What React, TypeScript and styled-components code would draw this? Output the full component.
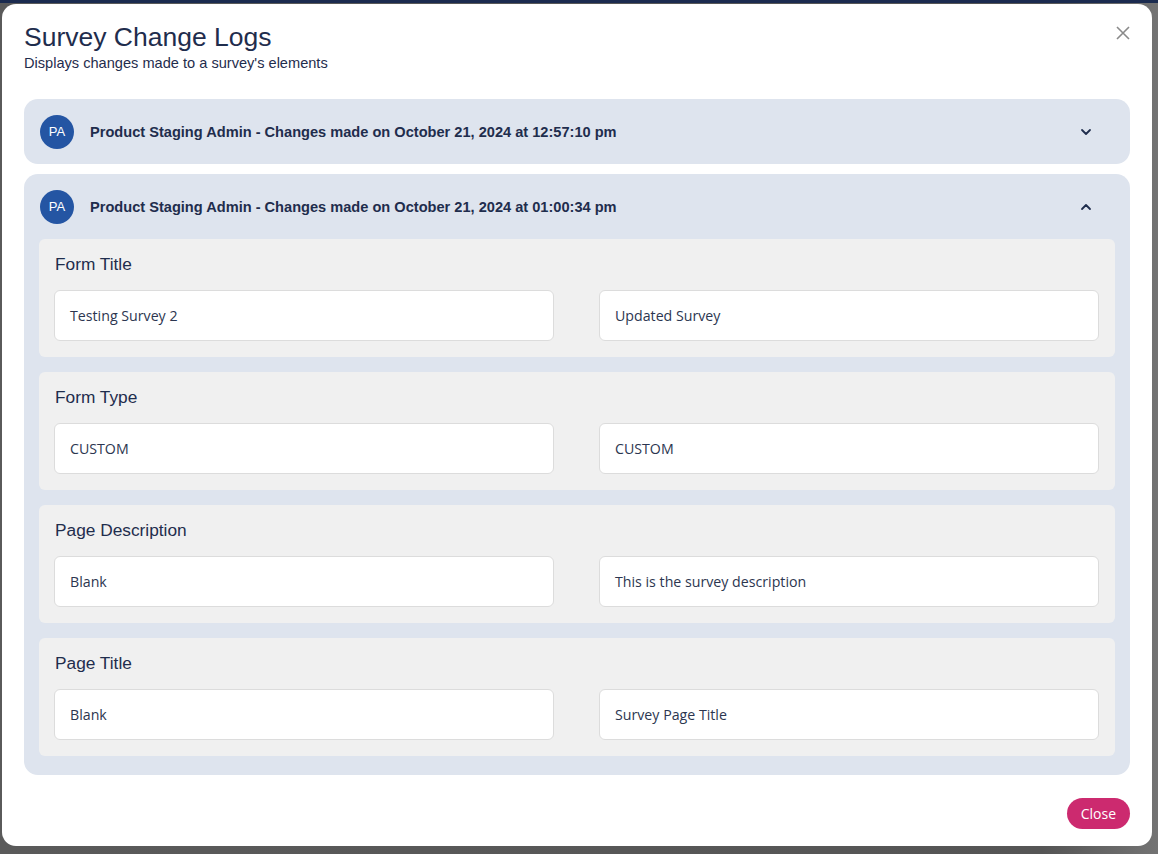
import { createGlobalStyle, styled } from "styled-components";

const GlobalStyle = createGlobalStyle`
  html, body {
    margin: 0;
    padding: 0;
    background: #555555;
  }
  * { box-sizing: border-box; }
`;

const Backdrop = styled.div`
  min-height: 854px;
  border-top: 3px solid #1b2b4f;
  padding: 1px 6px 8px 2px;
  background: linear-gradient(to right, #5a5a5a 0%, #555555 90%, #737373 100%);
`;

const Modal = styled.div`
  position: relative;
  background: #ffffff;
  border-radius: 14px;
  height: 842px;
  padding: 17px 22px 16px 22px;
  display: flex;
  flex-direction: column;
  font-family: "Liberation Sans", Arial, sans-serif;
  color: #1f2d4d;
`;

const Header = styled.div`
  margin-bottom: 27px;
`;

const Title = styled.h1`
  margin: 0;
  font-size: 26.5px;
  font-weight: 400;
  line-height: 32px;
  color: #1f2d4d;
`;

const Subtitle = styled.p`
  margin: 1px 0 0;
  font-size: 14.6px;
  line-height: 18px;
  color: #1f2d4d;
`;

const CloseX = styled.button`
  position: absolute;
  top: 19px;
  right: 19px;
  width: 20px;
  height: 20px;
  padding: 0;
  border: none;
  background: none;
  cursor: pointer;
  display: flex;
  align-items: center;
  justify-content: center;
`;

const List = styled.div`
  display: flex;
  flex-direction: column;
  gap: 10px;
`;

const Item = styled.div`
  background: #dee4ee;
  border-radius: 14px;
`;

const ItemHead = styled.div`
  height: 65px;
  display: flex;
  align-items: center;
  padding: 0 38px 0 16px;
  gap: 16px;
`;

const Avatar = styled.div`
  width: 34px;
  height: 34px;
  border-radius: 50%;
  background: #2455a3;
  color: #ffffff;
  font-size: 13px;
  display: flex;
  align-items: center;
  justify-content: center;
  flex-shrink: 0;
`;

const HeadText = styled.div`
  flex: 1;
  font-size: 14.6px;
  font-weight: 700;
  color: #1f2d4d;
`;

const ItemBody = styled.div`
  display: flex;
  flex-direction: column;
  gap: 15px;
  padding: 0 15px 19px;
`;

const Section = styled.div`
  background: #f0f0f0;
  border-radius: 6px;
  padding: 15px 16px 16px 15px;
`;

const SectionTitle = styled.div`
  font-size: 17.3px;
  line-height: 20px;
  color: #1f2d4d;
  margin-bottom: 16px;
  padding-left: 1px;
`;

const Values = styled.div`
  display: grid;
  grid-template-columns: 500px 500px;
  justify-content: space-between;
`;

const ValueBox = styled.div`
  height: 51px;
  background: #ffffff;
  border: 1px solid #dcdcdc;
  border-radius: 6px;
  padding: 0 15px;
  display: flex;
  align-items: center;
  font-family: "Open Sans", "Noto Sans", sans-serif;
  font-size: 14.2px;
  color: #2c3650;
`;

const Footer = styled.div`
  margin-top: auto;
  display: flex;
  justify-content: flex-end;
`;

const CloseButton = styled.button`
  height: 31px;
  padding: 0 14px;
  margin-bottom: 1px;
  border: none;
  border-radius: 16px;
  background: #cc2a6f;
  color: #ffffff;
  font-family: "Open Sans", "Noto Sans", sans-serif;
  font-size: 14px;
  cursor: pointer;
`;

const Chevron = ({ up }: { up?: boolean }) => (
  <svg width="12" height="12" viewBox="0 0 12 12" fill="none">
    <path
      d={up ? "M2 8l4-4 4 4" : "M2 4l4 4 4-4"}
      stroke="#1f2d4d"
      strokeWidth="1.8"
      strokeLinecap="round"
      strokeLinejoin="round"
    />
  </svg>
);

const changes = [
  { label: "Form Title", from: "Testing Survey 2", to: "Updated Survey" },
  { label: "Form Type", from: "CUSTOM", to: "CUSTOM" },
  { label: "Page Description", from: "Blank", to: "This is the survey description" },
  { label: "Page Title", from: "Blank", to: "Survey Page Title" },
];

const logs = [
  { id: 1, when: "October 21, 2024 at 12:57:10 pm", open: false },
  { id: 2, when: "October 21, 2024 at 01:00:34 pm", open: true },
];

export default function App() {
  return (
    <>
      <GlobalStyle />
      <Backdrop>
        <Modal>
          <Header>
            <Title>Survey Change Logs</Title>
            <Subtitle>Displays changes made to a survey's elements</Subtitle>
          </Header>
          <CloseX aria-label="close">
            <svg width="14" height="14" viewBox="0 0 14 14">
              <path d="M1 1l12 12M13 1L1 13" stroke="#8a8a8a" strokeWidth="1.6" />
            </svg>
          </CloseX>
          <List>
            {logs.map((log) => (
              <Item key={log.id}>
                <ItemHead>
                  <Avatar>PA</Avatar>
                  <HeadText>
                    Product Staging Admin - Changes made on {log.when}
                  </HeadText>
                  <Chevron up={log.open} />
                </ItemHead>
                {log.open ? (
                  <ItemBody>
                    {changes.map((c) => (
                      <Section key={c.label}>
                        <SectionTitle>{c.label}</SectionTitle>
                        <Values>
                          <ValueBox>{c.from}</ValueBox>
                          <ValueBox>{c.to}</ValueBox>
                        </Values>
                      </Section>
                    ))}
                  </ItemBody>
                ) : null}
              </Item>
            ))}
          </List>
          <Footer>
            <CloseButton>Close</CloseButton>
          </Footer>
        </Modal>
      </Backdrop>
    </>
  );
}
